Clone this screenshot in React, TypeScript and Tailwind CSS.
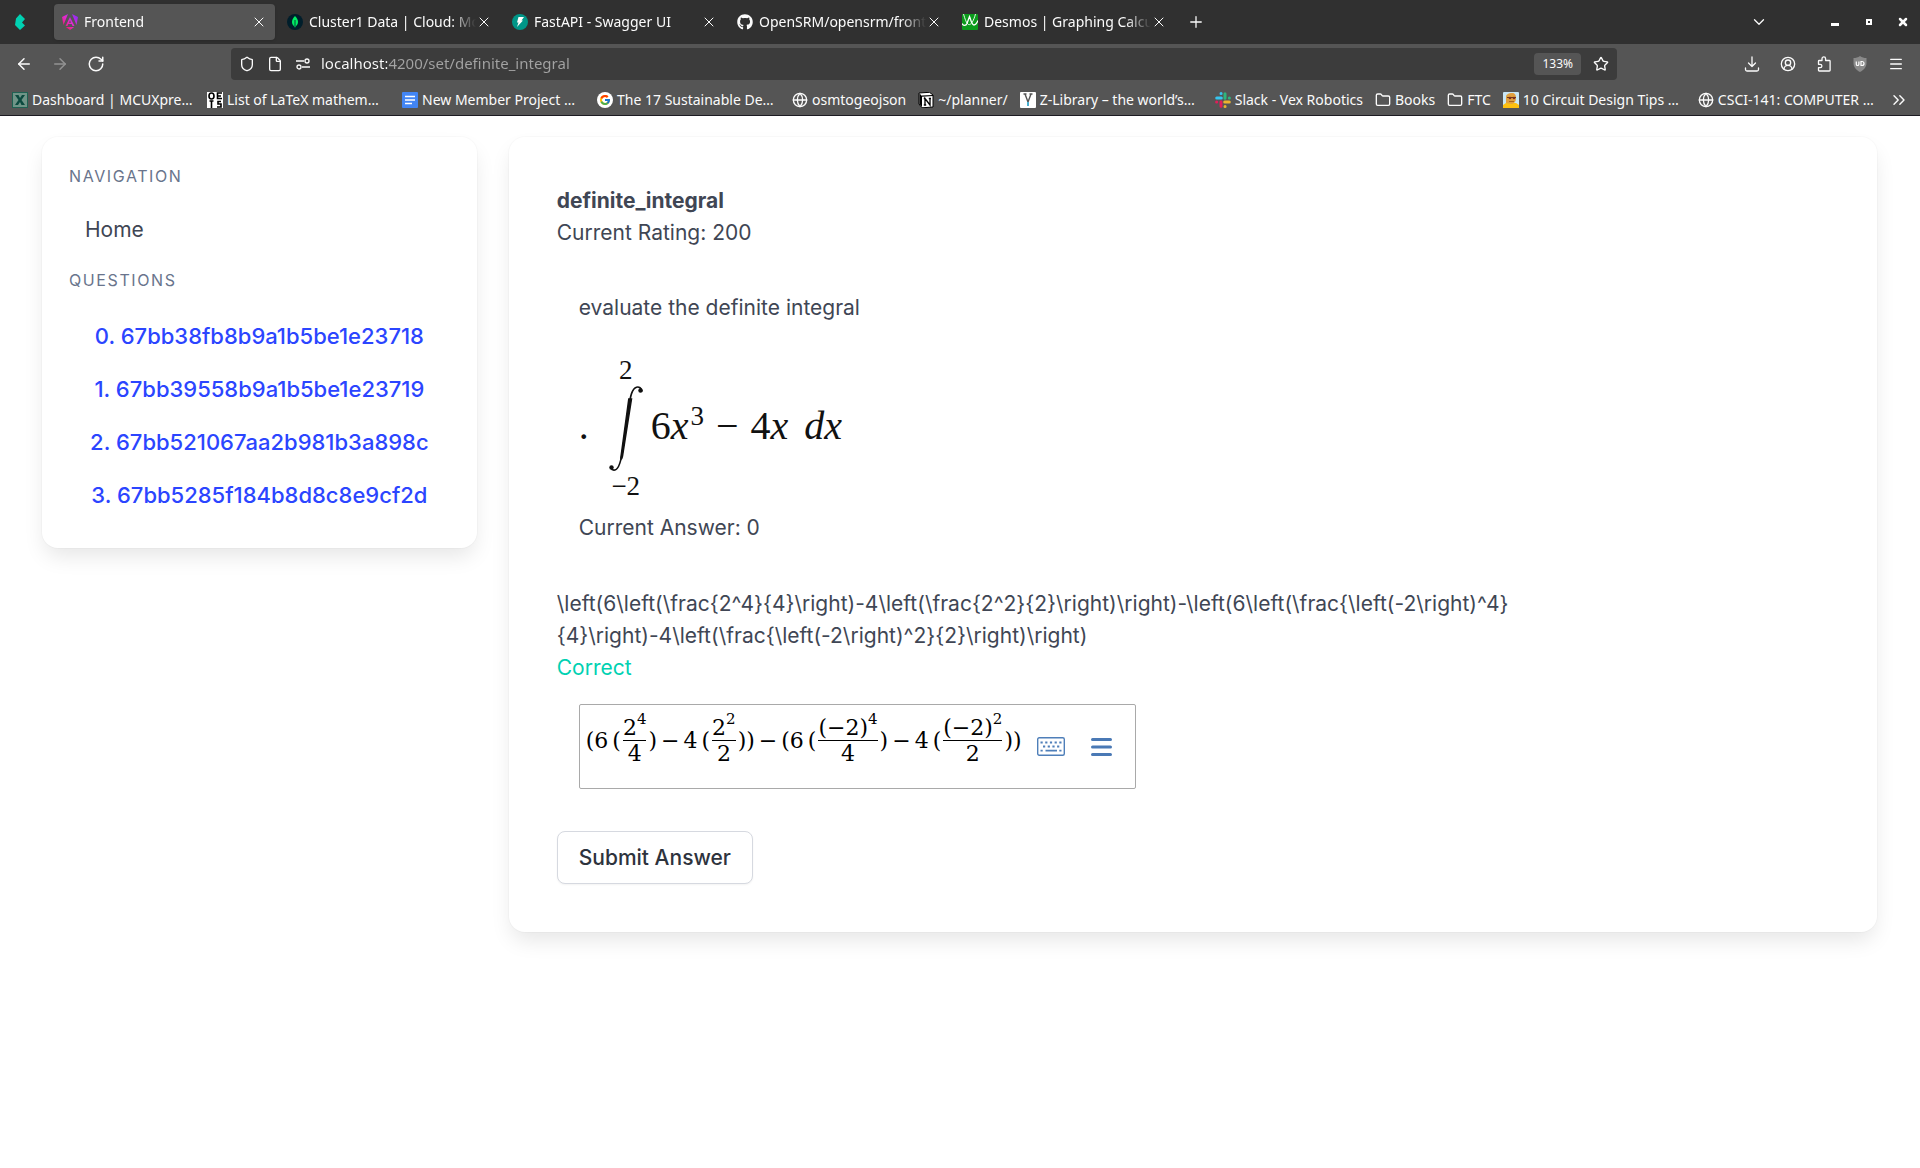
import type { ReactNode } from "react";
import {
  ArrowLeft,
  ArrowRight,
  ChevronDown,
  ChevronsRight,
  CircleUserRound,
  File,
  Folder,
  Globe,
  Menu,
  Plus,
  RotateCw,
  Shield,
  Star,
  X,
} from "lucide-react";
import { FaGithub } from "react-icons/fa";
import { FcGoogle } from "react-icons/fc";

/* ---------- favicons ---------- */

function BulmaIcon() {
  return (
    <svg viewBox="0 0 16 16" className="size-4">
      <path d="M3 11 4 4.500 8 0l5 5-3 3.500 3 3L8 16z" fill="#00d1b2" />
    </svg>
  );
}

function AngularIcon() {
  return (
    <svg viewBox="0 0 16 16" className="size-4">
      <defs>
        <linearGradient id="ng" x1="0" y1="1" x2="1" y2="0">
          <stop offset="0" stopColor="#f0133c" />
          <stop offset=".5" stopColor="#e22bd0" />
          <stop offset="1" stopColor="#7a2cff" />
        </linearGradient>
      </defs>
      <path
        d="M0 3 6 0 1.500 11zM16 3 10 0l4.500 11zM8 3l4.500 9h-2l-.8-2H6.300l-.8 2h-2zM8 6.200 7 8.700h2zM3.800 13h8.400L8 16z"
        fill="url(#ng)"
        fillRule="evenodd"
      />
    </svg>
  );
}

function MongoIcon() {
  return (
    <svg viewBox="0 0 16 16" className="size-4">
      <circle cx="8" cy="8" r="8" fill="#001e2b" />
      <path d="M8 2c2 2.200 3 4 3 6 0 2.200-1.200 3.700-2.600 4.500L8 14l-.4-1.500C6.200 11.700 5 10.200 5 8c0-2 1-3.800 3-6z" fill="#00ed64" />
      <path d="M8 6v6" stroke="#001e2b" strokeWidth=".8" />
    </svg>
  );
}

function FastApiIcon() {
  return (
    <svg viewBox="0 0 16 16" className="size-4">
      <circle cx="8" cy="8" r="8" fill="#009688" />
      <path d="M6.500 3h5.500L9.500 6.500H11L5 13l1.500-4.500H5z" fill="#fff" />
    </svg>
  );
}

function DesmosIcon() {
  return (
    <svg viewBox="0 0 16 16" className="size-4">
      <rect width="16" height="16" rx="1" fill="#0b9b1c" />
      <path d="M0 9.500c1.500 2.500 4 2.500 5 0L7.500 2.500C9 6 9.500 11 12 11c1.800 0 3-2 4-4.500" fill="none" stroke="#fff" strokeWidth="1.300" />
      <path d="M1.500 0C3 5 4.500 9.500 6.500 10.500 9 11.500 12 6 13.500 0" fill="none" stroke="#fff" strokeWidth=".9" />
    </svg>
  );
}

function McuIcon() {
  return (
    <svg viewBox="0 0 16 16" className="size-4">
      <rect x=".5" y=".5" width="15" height="15" fill="#6f9488" stroke="#1f6153" />
      <path d="M3 3h3.500L8 6l2-3h3l-3.500 5 3.500 5H9.500L8 10l-2 3H3l3.500-5z" fill="#0c4a40" />
    </svg>
  );
}

function OeisIcon() {
  return (
    <svg viewBox="0 0 16 16" className="size-4">
      <rect width="16" height="16" fill="#fff" />
      <g fill="none" stroke="#000" strokeWidth="1.600">
        <ellipse cx="4.500" cy="4" rx="2.500" ry="3" />
        <path d="M15 1h-4.500v5.500H15M10.500 4H14M4.500 9v7M2.500 9h4M14 9.500h-3v2.500h3v3h-4" />
      </g>
    </svg>
  );
}

function DocsIcon() {
  return (
    <svg viewBox="0 0 16 16" className="size-4">
      <rect width="16" height="16" rx="1" fill="#4285f4" />
      <path d="M3 4.500h10M3 8h10M3 11.500h7" stroke="#fff" strokeWidth="1.500" />
    </svg>
  );
}

function GoogleIcon() {
  return (
    <span className="flex size-4 items-center justify-center rounded-full bg-white">
      <FcGoogle className="size-3" />
    </span>
  );
}

function NotionIcon() {
  return (
    <svg viewBox="0 0 16 16" className="size-4">
      <path d="M1 1 11.500.3 15 3v12l-11 .8L1 12z" fill="#fff" stroke="#000" />
      <path d="M1.500 1.500 4 4v11L1.500 12z" fill="#000" />
      <path d="M4 4.200 15 3.500" fill="none" stroke="#000" strokeWidth="1.200" />
      <path d="M7 13V6.500l5 6.500V6.500M5.800 6.500h1.800M5.800 13h2.400M10.800 6.500H13" fill="none" stroke="#000" strokeWidth="1.300" />
    </svg>
  );
}

function ZLibraryIcon() {
  return (
    <svg viewBox="0 0 16 16" className="size-4">
      <rect width="16" height="16" rx="1" fill="#fff" />
      <path d="M5 2l3 8 3-8M3.500 2h3M9.500 2h3" fill="none" stroke="#555" strokeWidth="1.400" />
      <path d="M8 10v4" stroke="#49afd0" strokeWidth="2" />
    </svg>
  );
}

function SlackIcon() {
  return (
    <svg viewBox="0 0 16 16" className="size-4" strokeWidth="3" strokeLinecap="round">
      <path d="M1.700 6h4.600M6 1.600h.1" stroke="#36c5f0" />
      <path d="M10 1.700v4.600M14.300 6h.1" stroke="#2eb67d" />
      <path d="M14.300 10H9.700M10 14.400h.1" stroke="#ecb22e" />
      <path d="M6 14.300V9.700M1.600 10h.1" stroke="#e01e5a" />
    </svg>
  );
}

function CircuitIcon() {
  return (
    <svg viewBox="0 0 16 16" className="size-4">
      <rect width="16" height="16" rx="1" fill="#c9e7f5" />
      <path d="M0 16v-3l3-2h10l3 2v3z" fill="#fdc010" />
      <path d="M3 11V5c0-3 3-4 6-4s4 2 4 5-1 5-4 6z" fill="#e0a040" />
      <path d="M4 5.500h9" stroke="#6b3b1c" />
      <circle cx="7" cy="6" r="1.300" fill="#7b2e22" />
      <circle cx="11" cy="6" r="1.300" fill="#7b2e22" />
      <path d="M6 9.500h5" stroke="#a8641f" />
    </svg>
  );
}

/* ---------- toolbar icons ---------- */

function PermissionsIcon() {
  return (
    <svg viewBox="0 0 16 16" className="size-4" fill="none" stroke="currentColor" strokeWidth="1.300">
      <path d="M1 5h8M7 11h8" />
      <circle cx="12" cy="5" r="2" />
      <circle cx="4" cy="11" r="2" />
    </svg>
  );
}

function DownloadIcon() {
  return (
    <svg viewBox="0 0 16 16" className="size-4" fill="none" stroke="currentColor" strokeWidth="1.300" strokeLinecap="round" strokeLinejoin="round">
      <path d="M8 1v9.500M4.500 7 8 10.500 11.500 7M1.500 12v1.500a1.500 1.500 0 0 0 1.500 1.500h10a1.500 1.500 0 0 0 1.500-1.500V12" />
    </svg>
  );
}

function ExtensionsIcon() {
  return (
    <svg viewBox="0 0 16 16" className="size-4" fill="none" stroke="currentColor" strokeWidth="1.300" strokeLinejoin="round">
      <path d="M6 4.500V2.700a1.800 1.800 0 0 1 3.600 0v1.800h3.700a.8.8 0 0 1 .8.800v8.900a.8.800 0 0 1-.8.800H3.300a.8.8 0 0 1-.8-.8v-2.500h1.700a1.700 1.700 0 0 0 0-3.400H2.500V5.300a.8.800 0 0 1 .8-.8z" />
    </svg>
  );
}

function UblockIcon() {
  return (
    <svg viewBox="0 0 16 16" className="size-4">
      <path d="M8 0c2 1.500 4 2 6.500 2v5c0 4-2.500 7-6.500 9-4-2-6.500-5-6.500-9V2C4 2 6 1.500 8 0z" fill="#8a8a8a" />
      <path d="M4.300 5.500v2.700a1.300 1.300 0 0 0 2.600 0V5.500M9 5.500v4h1a2 2 0 0 0 0-4z" fill="none" stroke="#fff" strokeWidth="1.200" />
    </svg>
  );
}

function KeyboardIcon() {
  return (
    <svg viewBox="0 0 28 19" className="h-[19px] w-7">
      <rect x=".7" y=".7" width="26.600" height="17.600" rx="1.500" fill="none" stroke="#4f7fb9" strokeWidth="1.400" />
      <g stroke="#4f7fb9" strokeWidth="2.200">
        <path d="M3.500 5.500h21" strokeDasharray="2.200 2.500" />
        <path d="M6 9.500h17" strokeDasharray="2.200 2.500" />
        <path d="M3.500 13.700h2.200M8.500 13.700h11.500M22.300 13.700h2.200" strokeWidth="1.800" />
      </g>
    </svg>
  );
}

function MathMenuIcon() {
  return (
    <svg viewBox="0 0 21 18" className="h-[18px] w-[21px]" stroke="#4a79b5" strokeWidth="3" strokeLinecap="round">
      <path d="M1.500 1.500h18M1.500 9h18M1.500 16.500h18" />
    </svg>
  );
}

/* ---------- browser chrome ---------- */

const tabs = [
  { title: "Frontend", icon: <AngularIcon />, active: true },
  { title: "Cluster1 Data | Cloud: MongoDB", icon: <MongoIcon /> },
  { title: "FastAPI - Swagger UI", icon: <FastApiIcon /> },
  { title: "OpenSRM/opensrm/frontend", icon: <FaGithub className="size-4" /> },
  { title: "Desmos | Graphing Calculator", icon: <DesmosIcon /> },
];

const bookmarks = [
  { label: "Dashboard | MCUXpre…", icon: <McuIcon />, wide: true },
  { label: "List of LaTeX mathem…", icon: <OeisIcon />, wide: true },
  { label: "New Member Project …", icon: <DocsIcon />, wide: true },
  { label: "The 17 Sustainable De…", icon: <GoogleIcon />, wide: true },
  { label: "osmtogeojson", icon: <Globe className="size-4" /> },
  { label: "~/planner/", icon: <NotionIcon /> },
  { label: "Z-Library – the world’s…", icon: <ZLibraryIcon />, wide: true },
  { label: "Slack - Vex Robotics", icon: <SlackIcon /> },
  { label: "Books", icon: <Folder className="size-4" /> },
  { label: "FTC", icon: <Folder className="size-4" /> },
  { label: "10 Circuit Design Tips …", icon: <CircuitIcon />, wide: true },
  { label: "CSCI-141: COMPUTER …", icon: <Globe className="size-4" />, wide: true },
];

function TabBar() {
  return (
    <div className="flex h-11 items-center bg-[#303030] pl-3 pr-[9px]">
      <button aria-label="Bulma" className="mr-[26px]">
        <BulmaIcon />
      </button>
      <div className="flex gap-1">
        {tabs.map((tab) => (
          <div
            key={tab.title}
            className={`flex h-9 w-[221px] items-center rounded pl-2 pr-2 ${tab.active ? "bg-[#555555] shadow" : ""}`}
          >
            <button className="flex min-w-0 flex-1 items-center gap-1.5 text-left">
              <span className="shrink-0">{tab.icon}</span>
              <span className="flex-1 overflow-hidden whitespace-nowrap mask-r-from-85% mask-r-to-100%">
                {tab.title}
              </span>
            </button>
            <button aria-label="Close tab">
              <X className="size-4" strokeWidth={1.5} />
            </button>
          </div>
        ))}
      </div>
      <button aria-label="New tab" className="ml-3">
        <Plus className="size-[18px]" strokeWidth={1.7} />
      </button>
      <button aria-label="List all tabs" className="ml-auto mr-[59px]">
        <ChevronDown className="size-[18px]" strokeWidth={1.7} />
      </button>
      <div className="flex items-center gap-[18px]">
        <button aria-label="Minimize" className="flex h-4 w-4 items-center justify-center">
          <span className="mt-1 h-[3px] w-2 bg-white" />
        </button>
        <button aria-label="Maximize" className="flex h-4 w-4 items-center justify-center">
          <span className="size-[6px] border-2 border-white" />
        </button>
        <button aria-label="Close window" className="flex h-4 w-4 items-center justify-center">
          <X className="size-3" strokeWidth={5} />
        </button>
      </div>
    </div>
  );
}

function Toolbar() {
  return (
    <div className="flex h-10 items-center bg-[#555555] pl-[15px] pr-4">
      <div className="flex w-[216px] items-center gap-[18px]">
        <button aria-label="Back">
          <ArrowLeft className="size-[18px]" />
        </button>
        <button aria-label="Forward" className="text-[#929292]">
          <ArrowRight className="size-[18px]" />
        </button>
        <button aria-label="Reload">
          <RotateCw className="size-[18px]" />
        </button>
      </div>
      <div className="flex h-8 flex-1 items-center rounded bg-[#3c3c3c] pl-2 pr-2">
        <Shield className="size-4" />
        <File className="ml-3 size-4" />
        <span className="ml-3">
          <PermissionsIcon />
        </span>
        <input
          aria-label="Address"
          readOnly
          value="localhost:4200/set/definite_integral"
          className="ml-2.5 min-w-0 flex-1 bg-[linear-gradient(to_right,#fbfbfb_66px,#a3a3a3_66px)] bg-clip-text text-[15px] text-transparent outline-none"
        />
        <button className="h-[22px] rounded-sm bg-[#555555] px-2 text-xs">133%</button>
        <button aria-label="Bookmark this page" className="ml-3">
          <Star className="size-4" />
        </button>
      </div>
      <div className="ml-[127px] flex items-center gap-5">
        <button aria-label="Downloads">
          <DownloadIcon />
        </button>
        <button aria-label="Account">
          <CircleUserRound className="size-4" />
        </button>
        <button aria-label="Extensions">
          <ExtensionsIcon />
        </button>
        <button aria-label="uBlock Origin">
          <UblockIcon />
        </button>
        <button aria-label="Menu">
          <Menu className="size-4" />
        </button>
      </div>
    </div>
  );
}

function BookmarksBar() {
  return (
    <nav className="flex h-8 items-center gap-3 border-b border-[#1c1b22] bg-[#555555] px-3">
      {bookmarks.map((b) => (
        <a key={b.label} href="#" className="flex shrink-0 items-center gap-1 whitespace-nowrap">
          {b.icon}
          <span className={b.wide ? "w-[163px]" : ""}>{b.label}</span>
        </a>
      ))}
      <button aria-label="More bookmarks" className="-ml-1">
        <ChevronsRight className="size-5" strokeWidth={1.7} />
      </button>
    </nav>
  );
}

/* ---------- page ---------- */

const questions = [
  "67bb38fb8b9a1b5be1e23718",
  "67bb39558b9a1b5be1e23719",
  "67bb521067aa2b981b3a898c",
  "67bb5285f184b8d8c8e9cf2d",
];

function Card({ className, children }: { className: string; children: ReactNode }) {
  return (
    <div
      className={`rounded-2xl bg-white shadow-[0_11px_21px_-3px_rgba(10,10,10,0.1),0_0_0_1px_rgba(10,10,10,0.02)] ${className}`}
    >
      {children}
    </div>
  );
}

function Sidebar() {
  return (
    <Card className="col-span-3 self-start p-[27px]">
      <p className="text-base tracking-widest text-[#69748c]">NAVIGATION</p>
      <a href="#" className="mt-4 block px-4 py-2.5">
        Home
      </a>
      <p className="mt-3 text-base tracking-widest text-[#69748c]">QUESTIONS</p>
      <ul className="mt-[17px]">
        {questions.map((id, i) => (
          <li key={id}>
            <a href="#" className="flex h-[53px] items-center justify-center text-[22px] font-medium text-[#2b45ff]">
              {i}. {id}
            </a>
          </li>
        ))}
      </ul>
    </Card>
  );
}

function Integral() {
  return (
    <div className="mt-[30px] mb-3 flex font-['Liberation_Serif',serif] text-[40px] leading-[48px] text-[#111]">
      <span className="w-[30px] pt-12">.</span>
      <div className="flex w-[34px] flex-col items-center text-[27px]">
        <span className="leading-8">2</span>
        <svg viewBox="0 0 34 86" className="h-[86px] w-[34px]">
          <path
            d="M33 5.500C32.500 2 30 .5 27.500 1.200 23 2.500 21.500 10 19.500 22L14 62c-1.500 11-3.500 21-8 22-2 .4-3.500-.8-4-2"
            fill="none"
            stroke="#111"
            strokeWidth="1.700"
          />
          <path d="M22.500 13 13.500 70c-.8 4-2 4-1.500.5L19.800 13z" fill="#111" stroke="#111" strokeWidth="1.500" />
          <circle cx="31.500" cy="4.500" r="2.200" fill="#111" />
          <circle cx="2.500" cy="81.500" r="2.200" fill="#111" />
        </svg>
        <span className="leading-7">−2</span>
      </div>
      <div className="flex pt-12 pl-2">
        <span>6</span>
        <i>x</i>
        <span className="-mt-2.5 pl-0.5 text-[27px]">3</span>
        <span className="px-3">−</span>
        <span>4</span>
        <i>x</i>
        <i className="pl-4">dx</i>
      </div>
    </div>
  );
}

function Frac({ top, power, bottom }: { top: string; power: string; bottom: string }) {
  return (
    <span className="mx-0.5 flex flex-col items-center">
      <span className="flex h-[26px] items-center border-b border-black">
        {top}
        <span className="mb-4 text-[15px] leading-none">{power}</span>
      </span>
      <span className="flex h-[26px] items-center">{bottom}</span>
    </span>
  );
}

function MathField() {
  return (
    <div className="ml-[22px] mt-5 flex h-[85px] w-[557px] items-start rounded-xs border border-[#a9a9a9] pl-1.5">
      <div
        role="math"
        className="mt-2.5 flex items-center font-['DejaVu_Serif',serif] text-[22px] leading-none text-black"
      >
        <span>(6</span>
        <span className="ml-1">(</span>
        <Frac top="2" power="4" bottom="4" />
        <span>)</span>
        <span className="mx-1">−</span>
        <span>4</span>
        <span className="ml-1">(</span>
        <Frac top="2" power="2" bottom="2" />
        <span>))</span>
        <span className="mx-1">−</span>
        <span>(6</span>
        <span className="ml-1">(</span>
        <Frac top="(−2)" power="4" bottom="4" />
        <span>)</span>
        <span className="mx-1">−</span>
        <span>4</span>
        <span className="ml-1">(</span>
        <Frac top="(−2)" power="2" bottom="2" />
        <span>))</span>
      </div>
      <div className="ml-auto mr-[23px] mt-8 flex items-center gap-[26px]">
        <button aria-label="Toggle virtual keyboard">
          <KeyboardIcon />
        </button>
        <button aria-label="Math menu">
          <MathMenuIcon />
        </button>
      </div>
    </div>
  );
}

export default function App() {
  return (
    <div className="min-h-screen bg-white">
      <header className="font-['Noto_Sans',sans-serif] text-sm text-[#fbfbfb]">
        <TabBar />
        <Toolbar />
        <BookmarksBar />
      </header>

      <main className="grid grid-cols-12 gap-8 pt-[21px] pr-[43px] pl-[42px] font-['Inter',sans-serif] text-[21px] leading-8 text-[#404654]">
        <Sidebar />
        <Card className="col-span-9 p-12">
          <h1 className="font-bold">definite_integral</h1>
          <p>Current Rating: 200</p>

          <div className="mt-[43px] pl-[22px]">
            <p>evaluate the definite integral</p>
            <Integral />
            <p>Current Answer: 0</p>
          </div>

          <p className="mt-11 max-w-[1000px]">
            {"\\left(6\\left(\\frac{2^4}{4}\\right)-4\\left(\\frac{2^2}{2}\\right)\\right)-\\left(6\\left(\\frac{\\left(-2\\right)^4}{4}\\right)-4\\left(\\frac{\\left(-2\\right)^2}{2}\\right)\\right)"}
          </p>
          <p className="text-[#00d1b2]">Correct</p>

          <MathField />

          <button className="mt-[42px] h-[53px] rounded-lg border border-[#d6d9e0] bg-white px-[21px] font-medium text-[#2e333d] shadow-xs">
            Submit Answer
          </button>
        </Card>
      </main>
    </div>
  );
}
